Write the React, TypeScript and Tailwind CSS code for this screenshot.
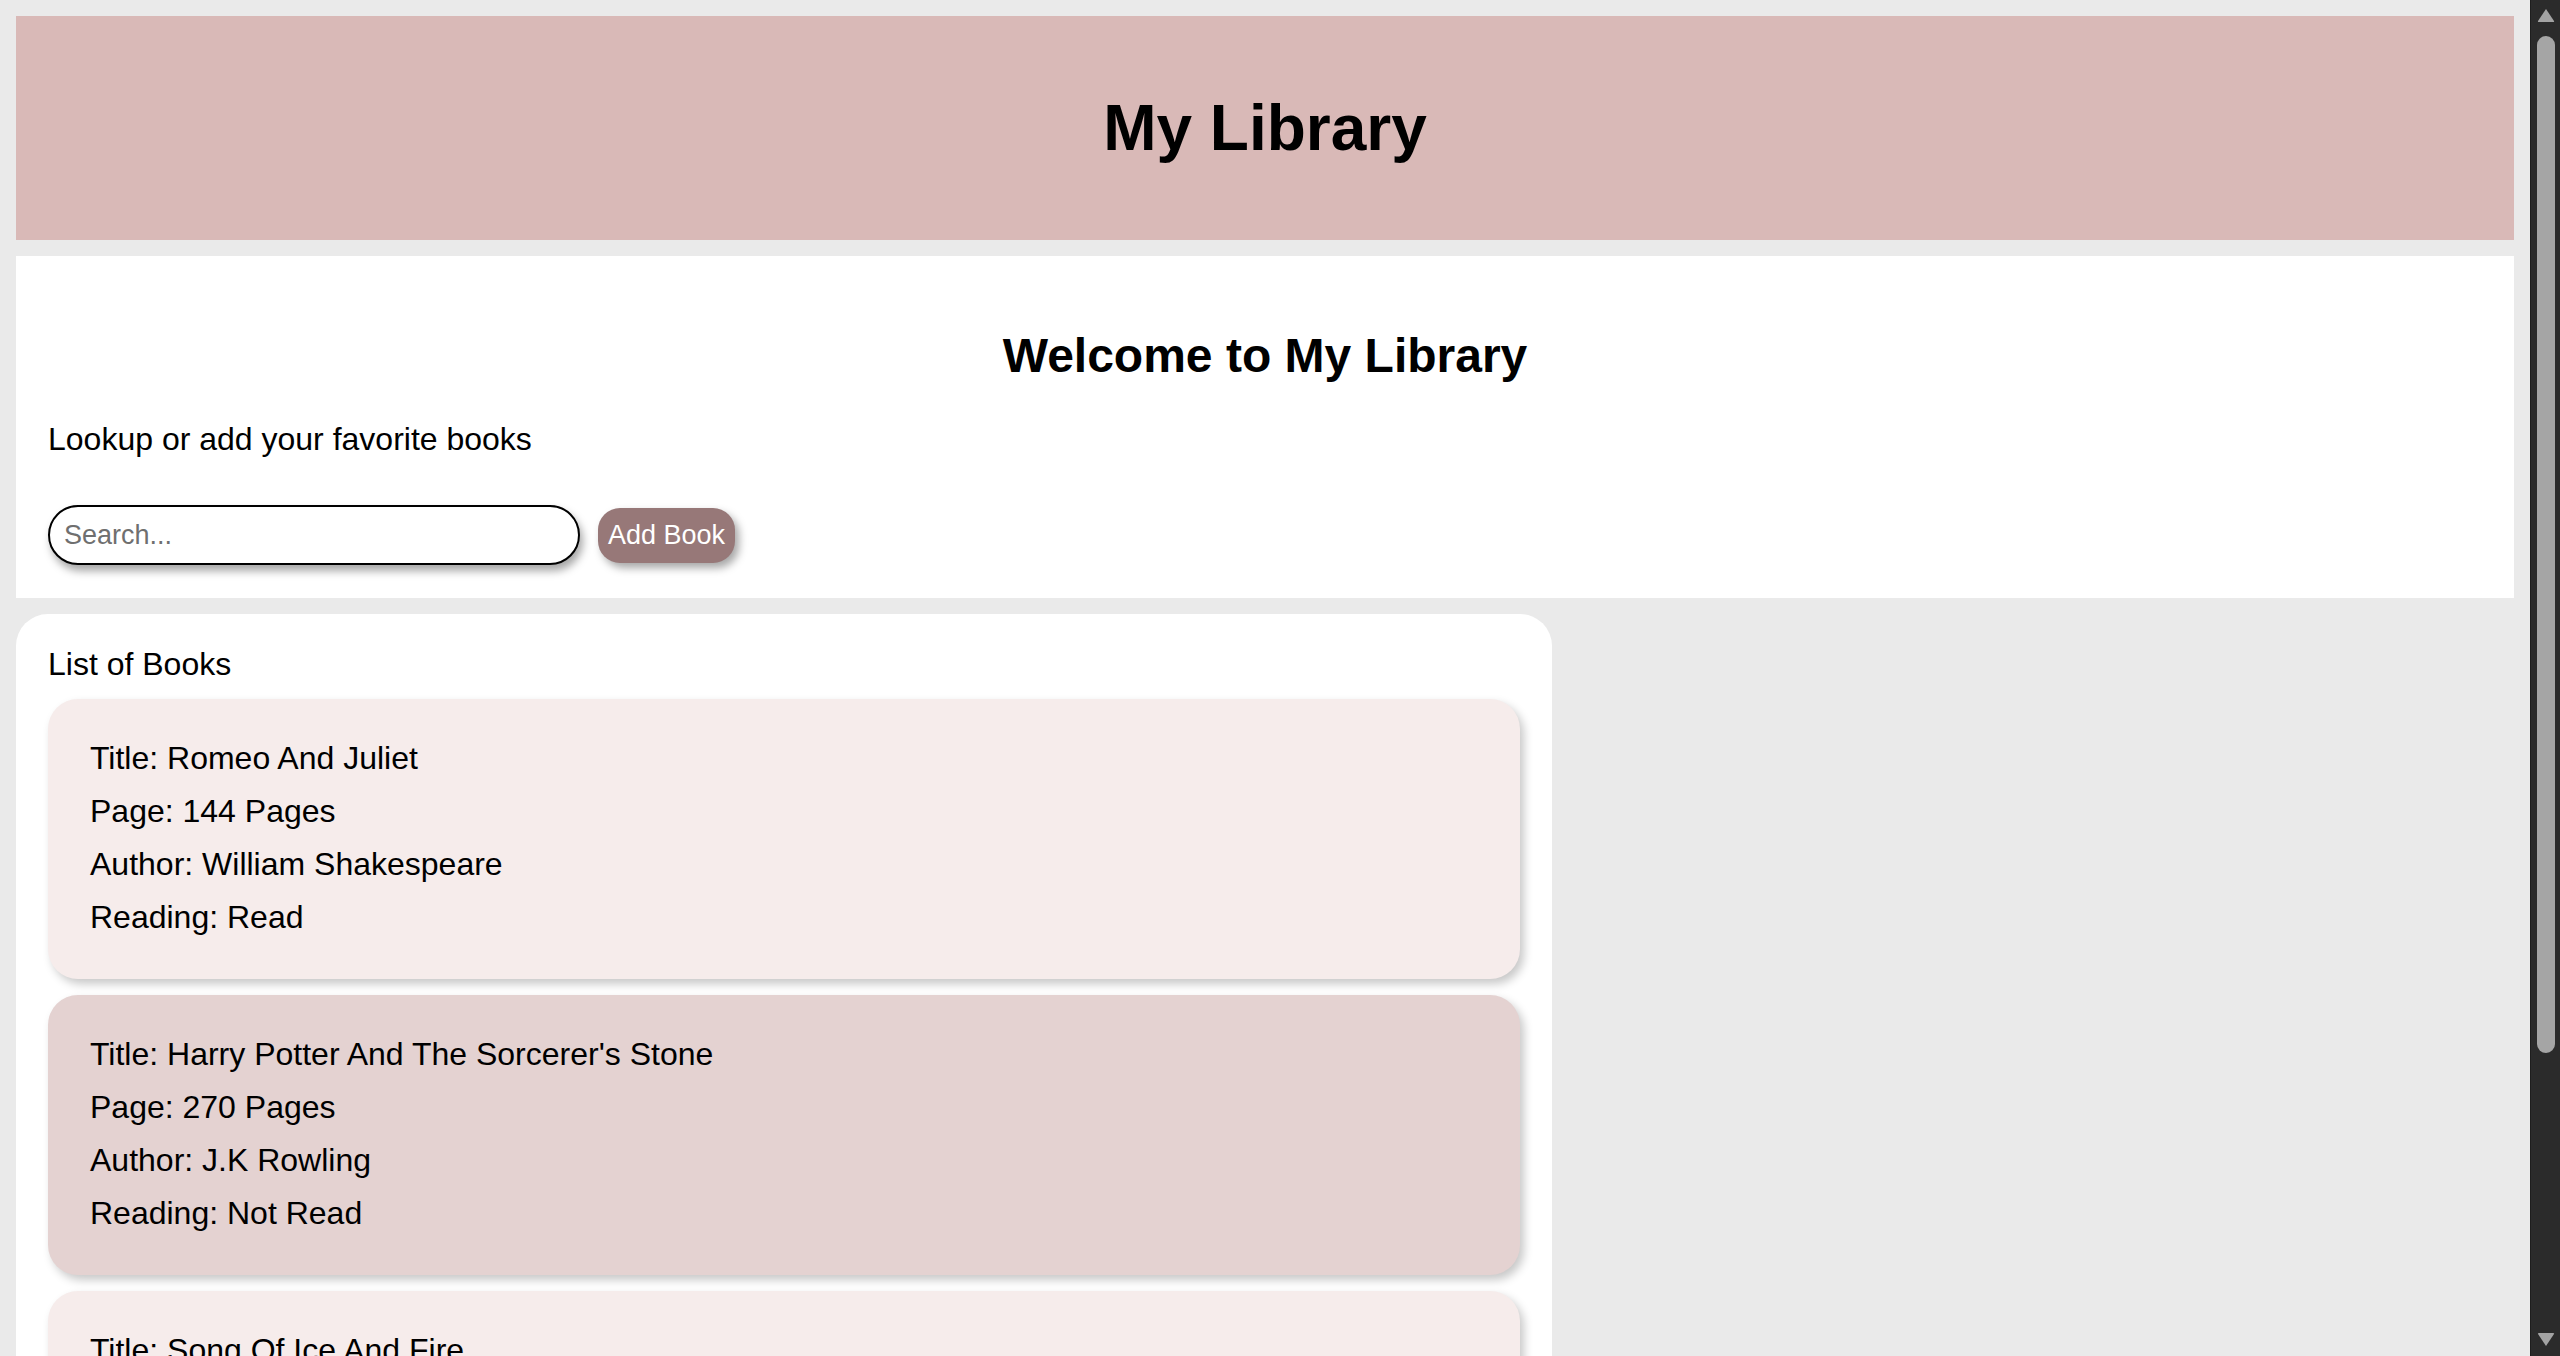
import React from "react";

type Book = {
  title: string;
  pages: number;
  author: string;
  read: boolean;
};

const books: Book[] = [
  { title: "Romeo And Juliet", pages: 144, author: "William Shakespeare", read: true },
  { title: "Harry Potter And The Sorcerer's Stone", pages: 270, author: "J.K Rowling", read: false },
  { title: "Song Of Ice And Fire", pages: 694, author: "George R. R. Martin", read: true },
];

function BookCard({ book, index }: { book: Book; index: number }) {
  const bg = index % 2 === 0 ? "bg-[#f6eceb]" : "bg-[#e4d2d1]";
  return (
    <div
      className={`${bg} rounded-[30px] pl-[42px] pr-[32px] pt-[33px] pb-[35px] text-[32px] leading-[53px] text-black shadow-[4px_5px_10px_rgba(0,0,0,0.22)] shrink-0`}
    >
      <div>Title: {book.title}</div>
      <div>Page: {book.pages} Pages</div>
      <div>Author: {book.author}</div>
      <div>Reading: {book.read ? "Read" : "Not Read"}</div>
    </div>
  );
}

function Scrollbar() {
  return (
    <div className="w-[30px] shrink-0 bg-[#2b2b2b] border-l border-[#1e1e1e] flex flex-col items-center pt-[8px] pb-[9px]">
      {/* up arrow */}
      <svg width="18" height="15" viewBox="0 0 18 15">
        <path d="M9 1 L17 13 Q17.5 14 16 14 L2 14 Q0.5 14 1 13 Z" fill="#a3a3a3" />
      </svg>
      <div className="mt-[13px] w-[18px] h-[1017px] rounded-full bg-[#a5a5a5]" />
      <div className="flex-1" />
      {/* down arrow */}
      <svg width="18" height="15" viewBox="0 0 18 15">
        <path d="M9 14 L17 2 Q17.5 1 16 1 L2 1 Q0.5 1 1 2 Z" fill="#a3a3a3" />
      </svg>
    </div>
  );
}

export default function App() {
  return (
    <div
      className="flex h-[1356px] w-full overflow-hidden bg-[#eaeaea] text-black"
      style={{ fontFamily: '"Liberation Sans", Arial, sans-serif' }}
    >
      <div className="flex-1 min-w-0 flex flex-col gap-[16px] p-[16px] overflow-hidden">
        {/* header */}
        <header className="bg-[#d9b9b7] shrink-0 px-[32px] py-[75px] text-center">
          <h1 className="text-[64px] font-bold leading-[74px]">My Library</h1>
        </header>

        {/* intro + search */}
        <section className="bg-white shrink-0 px-[32px] pt-[72px] pb-[33px]">
          <h2 className="text-center text-[48px] font-bold leading-[55px]">Welcome to My Library</h2>
          <p className="mt-[38px] text-[32px] leading-[37px]">Lookup or add your favorite books</p>
          <div className="mt-[47px] flex items-center gap-[18px]">
            <input
              type="text"
              placeholder="Search..."
              className="w-[532px] h-[60px] rounded-[30px] border-2 border-black bg-white pl-[14px] text-[27px] placeholder:text-[#6f6f6f] outline-none shadow-[3px_6px_9px_rgba(0,0,0,0.35)]"
            />
            <button className="h-[55px] px-[10px] rounded-[22px] bg-[#977878] text-white text-[27px] shadow-[4px_5px_8px_rgba(0,0,0,0.35)]">
              Add Book
            </button>
          </div>
        </section>

        {/* list */}
        <section className="w-[1536px] shrink-0 bg-white rounded-[32px] px-[32px] pt-[32px] pb-[32px] flex flex-col">
          <div className="text-[32px] leading-[37px]">List of Books</div>
          <div className="mt-[16px] flex flex-col gap-[16px]">
            {books.map((b, i) => (
              <BookCard key={b.title} book={b} index={i} />
            ))}
          </div>
        </section>
      </div>
      <Scrollbar />
    </div>
  );
}
